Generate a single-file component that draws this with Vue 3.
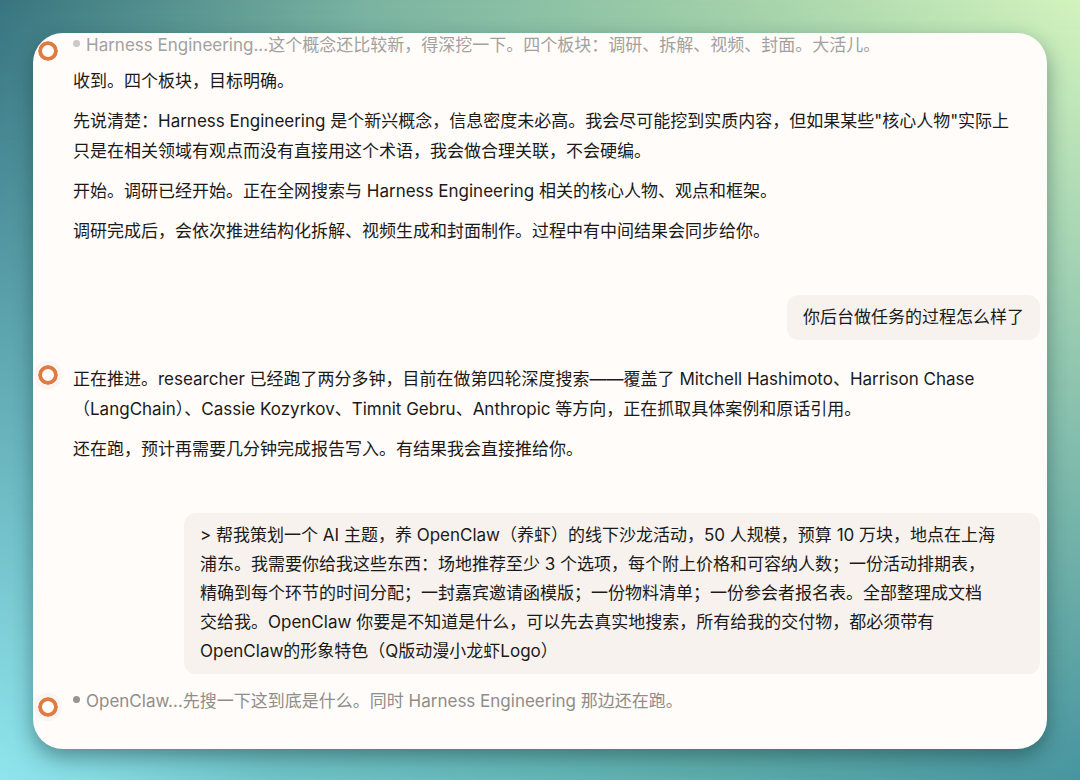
<template>
	<div class="backdrop">
		<main class="chat-card">
			<article
				v-for="message in messages"
				:key="message.id"
				class="message"
				:class="[message.role, { pondering: message.thought, faded: message.faded }]"
			>
				<template v-if="message.role === 'assistant'">
					<svg class="avatar" viewBox="0 0 20 20" aria-hidden="true">
						<circle cx="10" cy="10" r="8" />
					</svg>
					<div class="content">
						<div v-if="message.thought" class="thought">
							<span class="dot"></span>
							<span>{{ message.thought }}</span>
						</div>
						<p v-for="(text, index) in message.paragraphs" :key="index">{{ text }}</p>
					</div>
				</template>
				<div v-else class="bubble" :class="{ wide: message.wide }">{{ message.text }}</div>
			</article>
		</main>
	</div>
</template>

<script setup>
const messages = [
	{
		id: 1,
		role: "assistant",
		faded: true,
		thought: "Harness Engineering...这个概念还比较新，得深挖一下。四个板块：调研、拆解、视频、封面。大活儿。",
		paragraphs: [
			"收到。四个板块，目标明确。",
			"先说清楚：Harness Engineering 是个新兴概念，信息密度未必高。我会尽可能挖到实质内容，但如果某些\"核心人物\"实际上\n只是在相关领域有观点而没有直接用这个术语，我会做合理关联，不会硬编。",
			"开始。调研已经开始。正在全网搜索与 Harness Engineering 相关的核心人物、观点和框架。",
			"调研完成后，会依次推进结构化拆解、视频生成和封面制作。过程中有中间结果会同步给你。",
		],
	},
	{ id: 2, role: "user", text: "你后台做任务的过程怎么样了" },
	{
		id: 3,
		role: "assistant",
		paragraphs: [
			"正在推进。researcher 已经跑了两分多钟，目前在做第四轮深度搜索——覆盖了 Mitchell Hashimoto、Harrison Chase\n（LangChain）、Cassie Kozyrkov、Timnit Gebru、Anthropic 等方向，正在抓取具体案例和原话引用。",
			"还在跑，预计再需要几分钟完成报告写入。有结果我会直接推给你。",
		],
	},
	{
		id: 4,
		role: "user",
		wide: true,
		text: "> 帮我策划一个 AI 主题，养 OpenClaw（养虾）的线下沙龙活动，50 人规模，预算 10 万块，地点在上海\n浦东。我需要你给我这些东西：场地推荐至少 3 个选项，每个附上价格和可容纳人数；一份活动排期表，\n精确到每个环节的时间分配；一封嘉宾邀请函模版；一份物料清单；一份参会者报名表。全部整理成文档\n交给我。OpenClaw 你要是不知道是什么，可以先去真实地搜索，所有给我的交付物，都必须带有\nOpenClaw的形象特色（Q版动漫小龙虾Logo）",
	},
	{
		id: 5,
		role: "assistant",
		thought: "OpenClaw...先搜一下这到底是什么。同时 Harness Engineering 那边还在跑。",
		paragraphs: [],
	},
];
</script>

<style>
body {
	margin: 0;
}
</style>

<style scoped>
.backdrop {
	position: relative;
	isolation: isolate;
	box-sizing: border-box;
	min-height: 100vh;
	padding: 33px;
	background: linear-gradient(to right, #90e6ee 0%, #70c4c8 25%, #5cadab 65%, #4795a0 100%);
	font-family: Inter, "Noto Sans CJK SC", sans-serif;
	font-size: 17px;
	color: #1b1a19;
}

/* second colour band, fading out towards the bottom */
.backdrop::before {
	content: "";
	position: absolute;
	inset: 0;
	z-index: -1;
	background: linear-gradient(to right, #37747f 0%, #7ab3a0 34%, #a3d1a9 68%, #d3f3bd 100%);
	mask-image: linear-gradient(to bottom, #000, transparent);
}

.chat-card {
	padding: 0 7px 32px 5px;
	border-radius: 30px;
	background: #fffcf9;
	box-shadow: 0 8px 20px rgba(20, 50, 55, 0.45);
}

.message {
	display: flex;
	gap: 15px;
}

.message.user {
	justify-content: flex-end;
	margin-top: 49px;
}

.message.user + .message.assistant {
	margin-top: 24px;
}

.message.user + .message.pondering {
	margin-top: 15px;
}

.avatar {
	flex: none;
	width: 20px;
	height: 20px;
	margin-top: 1px;
	border-radius: 50%;
	background: #fffcf9;
	box-shadow: 0 0 0 4px #faf5f0;
	fill: none;
	stroke: #de7b42;
	stroke-width: 4;
}

.pondering .avatar {
	margin-top: 8px;
}

.faded .avatar {
	box-shadow: none;
}

.content {
	flex: 1;
	min-width: 0;
}

.content p {
	margin: 10px 0 0;
	line-height: 30px;
	white-space: pre-line;
}

.content p:first-child {
	margin-top: 0;
}

.thought {
	display: flex;
	align-items: center;
	gap: 6px;
	line-height: 24px;
	color: #8f8d8b;
}

.content .thought + p {
	margin-top: 9px;
}

.faded .thought {
	color: #a3a19f;
}

.dot {
	flex: none;
	width: 7px;
	height: 7px;
	margin-bottom: 3px;
	border-radius: 50%;
	background: #979593;
}

.faded .dot {
	background: #cbc9c7;
}

.bubble {
	box-sizing: border-box;
	max-width: calc(100% - 146px);
	padding: 8px 16px;
	border-radius: 12px;
	background: #f7f2ee;
	line-height: 29px;
	white-space: pre-line;
}

.bubble.wide {
	width: 100%;
}
</style>
